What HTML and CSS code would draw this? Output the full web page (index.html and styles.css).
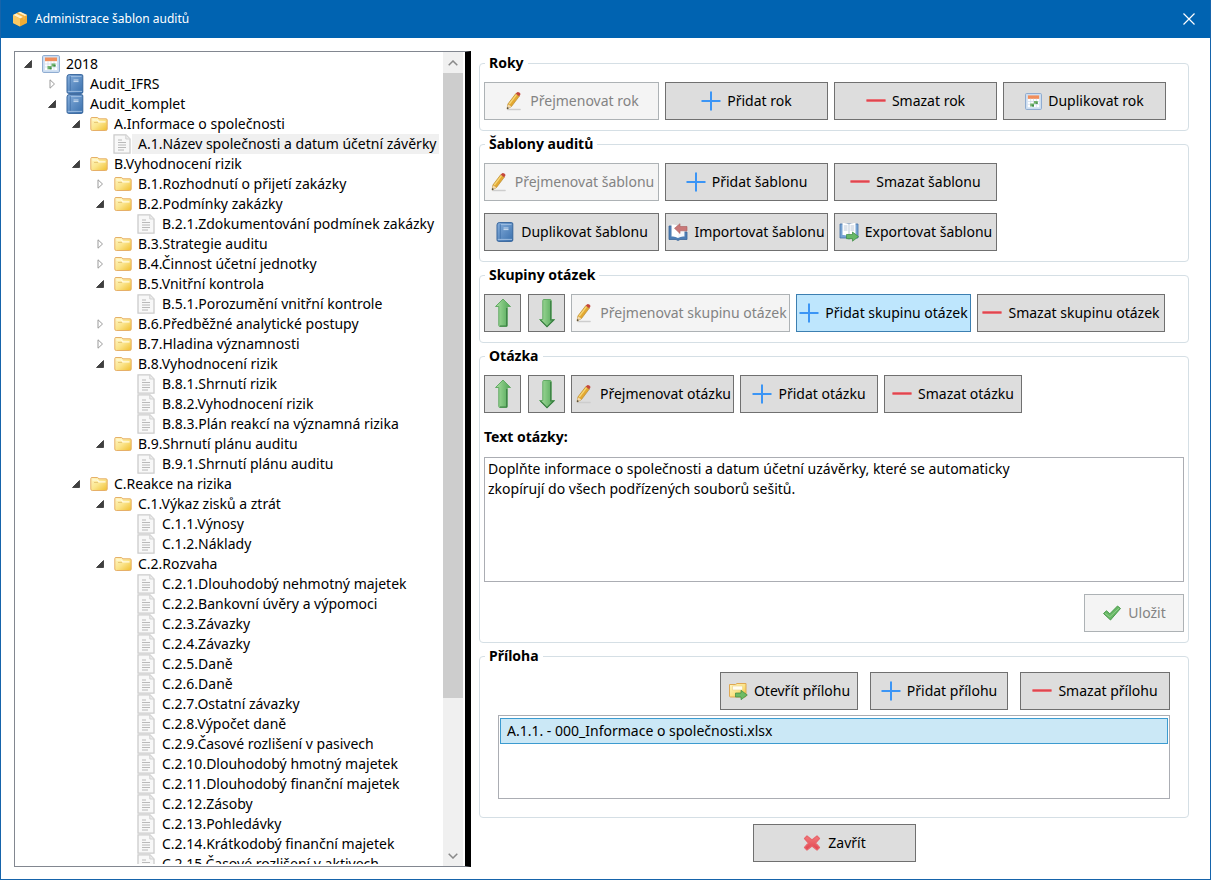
FILE: index.html
```html
<!DOCTYPE html>
<html lang="cs">
<head>
<meta charset="utf-8">
<title>Administrace šablon auditů</title>
<link rel="stylesheet" href="styles.css">
</head>
<body>
<svg class="sprite" aria-hidden="true">
  <defs>
    <linearGradient id="gBlue" x1="0" y1="0" x2="1" y2="1"><stop offset="0" stop-color="#86aedb"/><stop offset="1" stop-color="#3a70ad"/></linearGradient>
    <linearGradient id="gFolder" x1="0" y1="0" x2="1" y2="1"><stop offset="0" stop-color="#fff6c4"/><stop offset=".5" stop-color="#fbe58c"/><stop offset="1" stop-color="#f0bf2e"/></linearGradient>
    <linearGradient id="gGreen" x1="0" y1="0" x2="1" y2="0"><stop offset="0" stop-color="#a9dfa0"/><stop offset="1" stop-color="#4fa555"/></linearGradient>
    <linearGradient id="gRed" x1="0" y1="0" x2="0" y2="1"><stop offset="0" stop-color="#f37b7b"/><stop offset="1" stop-color="#e04450"/></linearGradient>
  </defs>
  <symbol id="open" viewBox="0 0 10 10"><path d="M8.500 1.500v7h-7z" fill="#404040" stroke="#222" stroke-width=".7"/></symbol>
  <symbol id="closed" viewBox="0 0 10 10"><path d="M3 .8v8.400L7.500 5z" fill="#fff" stroke="#9b9b9b"/></symbol>
  <symbol id="calendar" viewBox="0 0 18 18">
    <rect x=".6" y=".6" width="16.800" height="16.800" rx="1" fill="#d3e2f4" stroke="#86a5cd"/>
    <rect x="3" y="3" width="12" height="12" fill="#fff"/><rect x="3" y="2.500" width="12" height="3.700" fill="#f08e5c"/>
    <path d="M3 9h12M3 12h12M6 6v9M9 6v9M12 6v9" stroke="#ccd8e8" stroke-width=".7"/>
    <path d="M9.500 8.500h4v3h-4zM5.500 11h4v3.200h-4z" fill="#72b36c"/><path d="M11.500 10h2v1.500h-2zM7.500 12.500h2v1.700h-2z" fill="#3e8d49"/>
  </symbol>
  <symbol id="book" viewBox="0 0 18 20">
    <path d="M3.200.6H15.500q1.300 0 1.300 1.300V18q0 1.400-1.300 1.400H2.500Q1 19.400 1 17.800V3Q1 .6 3.200.6z" fill="url(#gBlue)" stroke="#37659c"/>
    <path d="M4.300 2.500v14.500" stroke="#3f70a8" stroke-width=".8"/><path d="M1.800 17.400H16" stroke="#a5c3e4" stroke-width=".9"/><path d="M5 2.500h10.500" stroke="#a5c3e4" stroke-width=".8"/><path d="M7.500 6h5M7.500 7.600h5" stroke="#d7e5f4" stroke-width=".9"/>
  </symbol>
  <symbol id="folder" viewBox="0 0 18 16">
    <path d="M.8 13V2.500Q.8 1.500 2 1.500h5.500l1.500 1.300h7q1.200 0 1.200 1.200V13q0 1.500-1.500 1.500H2.300Q.8 14.500.8 13z" fill="url(#gFolder)" stroke="#e6b068"/>
    <path d="M2.500 4h5l1.500 1.800h6.500" fill="none" stroke="#fffbe6" stroke-width="1.200"/><path d="M4 6.500h4" stroke="#e8c878"/>
  </symbol>
  <symbol id="page" viewBox="0 0 18 20">
    <path d="M1 .8h12L17 5v14.200H1z" fill="#f8f8f8" stroke="#cbcbcb" stroke-width="1.300"/><path d="M12.800 1v4H17" fill="#ececec" stroke="#d2d2d2"/>
    <path d="M5 6h4M5 8.500h8M5 11h8M5 13.500h8M5 16h6" stroke="#b2b2b2" stroke-width=".9"/>
  </symbol>
  <symbol id="pencil" viewBox="0 0 20 20">
    <path d="M4 18.500h12" stroke="#cdcdcd" stroke-width="1.600" stroke-linecap="round"/>
    <path d="M3 18l.9-5L11.800 2.600l3.600 2.500L7.500 15.500z" fill="#e3a932" stroke="#b07f22" stroke-width=".6"/>
    <path d="M5.300 13L12.700 3.300" stroke="#f7d777" stroke-width="1.300"/>
    <path d="M3 18l.9-4.800 3.500 2.400z" fill="#f0d9b0"/><path d="M2.900 18.200l.5-2.300 1.500 1z" fill="#333"/>
    <path d="M11.800 2.800l1-1.400q1-1 2.600.1 1.600 1.200.9 2.300l-1 1.400z" fill="#c4473b"/>
  </symbol>
  <symbol id="plus" viewBox="0 0 20 20"><path d="M10 .5v19M.5 10h19" stroke="#3b95f5" stroke-width="2"/></symbol>
  <symbol id="minus" viewBox="0 0 20 20"><path d="M.5 9.500h19" stroke="#ef8085" stroke-width="3"/><path d="M.5 9.500h19" stroke="#dd4650" stroke-width="1.600"/></symbol>
  <symbol id="up" viewBox="0 0 18 30"><path d="M9 1l7.500 7.500h-3.300v19q0 1-1 1H5.800q-1 0-1-1v-19H1.500z" fill="url(#gGreen)" stroke="#62aa64"/><path d="M12.700 10v18H6" fill="none" stroke="#3c8044" stroke-width="1.200"/></symbol>
  <symbol id="down" viewBox="0 0 18 30"><path d="M9 29l7.500-7.500h-3.300v-19q0-1-1-1H5.800q-1 0-1 1v19H1.500z" fill="url(#gGreen)" stroke="#62aa64"/><path d="M12.700 3v19h3L9 28.600 2.500 22" fill="none" stroke="#3c8044" stroke-width="1.200"/></symbol>
  <symbol id="import" viewBox="0 0 20 20">
    <path d="M1 4h3v10h12V10h3v7.500h-7l-2 1-2-1H1z" fill="#4c7db5" stroke="#3a6599" stroke-width=".8"/><path d="M3.500 2.500q4-.5 6.500 1.500v12q-3-2-6.500-1.500z" fill="#fff"/><path d="M16.500 5q-4-.5-6.500 1.500V16q3-2 6.500-1.500z" fill="#f4f7fb"/>
    <path d="M6.500 6.300L12 1.700v2.800h7v4.300h-7v2.700z" fill="#c97878" stroke="#a85c5c" stroke-width=".6"/>
  </symbol>
  <symbol id="export" viewBox="0 0 20 20">
    <path d="M1 2h18v14h-7l-2 1-2-1H1z" fill="#78a4d4" stroke="#4673a8" stroke-width=".8"/><path d="M3.500 1q4-.5 6.500 1.500v12Q7 12.500 3.500 13z" fill="#fff"/><path d="M16.500 1q-4-.5-6.500 1.500v12q3-2 6.500-1.500z" fill="#fff"/>
    <path d="M4.800 4h3.700M4.800 6h3.700M4.800 8h3.700M11.500 4h3.700M11.500 6h3.700M11.500 8h3.700M10 3v11" stroke="#a9b9cb" stroke-width=".8"/>
    <path d="M7.500 12.500h6V10l6 4.600-6 4.600v-2.500h-6z" fill="#67b866" stroke="#3b8b40" stroke-width=".7"/>
  </symbol>
  <symbol id="openfile" viewBox="0 0 20 20">
    <path d="M1.500 15V3.500h6l1.500-1h9V15q0 1-1 1H2.500q-1 0-1-1z" fill="url(#gFolder)" stroke="#dfa853"/><path d="M4.500 5h10v4h-10z" fill="#fffdf2" stroke="#ead08c" stroke-width=".6"/>
    <path d="M7.500 12h5.500V9.300l6.300 4.700-6.300 4.700V16H7.500z" fill="#6dbb63" stroke="#3d8a40" stroke-width=".7"/>
  </symbol>
  <symbol id="check" viewBox="0 0 20 20"><path d="M1.500 10.500l3-2.700 3.300 3L15.500 3l3 2.500L8.500 17z" fill="#68b766" stroke="#4a9b4c" stroke-linejoin="round"/><path d="M3 10.300l4.800 3.500L17 5.200" stroke="#8fd089" fill="none"/></symbol>
  <symbol id="cross" viewBox="0 0 20 20"><path d="M5 3l5 4 5-4 2.500 2.500-4 4.500 4 4.500L15 17l-5-4-5 4-2.500-2.500 4-4.500-4-4.500z" fill="url(#gRed)" stroke="#e8656b" stroke-width="1.200" stroke-linejoin="round"/></symbol>
</svg>

<header class="titlebar">
  <svg class="logo" viewBox="0 0 16 16" aria-hidden="true"><path d="M8 .7l7 3.200v8L8 15.500 1 11.900v-8z" fill="#f0ac35"/><path d="M8 .7l7 3.200L8 7.400 1 3.900z" fill="#fff0c8"/><path d="M1 3.900l7 3.500v8.100l-7-3.600z" fill="#fac964"/><path d="M4 2.500l7 3.500v3l2-1V5L6 1.600z" fill="#f3b444"/></svg>
  <h1>Administrace šablon auditů</h1>
  <button class="close" aria-label="Zavřít okno"><svg viewBox="0 0 12 12"><path d="M.5.5l11 11M11.500.5l-11 11" stroke="#fff" stroke-width="1.200"/></svg></button>
</header>

<main class="content">
  <nav class="tree-pane" aria-label="Šablony">
    <div class="tree-scroll">
      <ul class="tree">
        <li><div class="row"><button class="toggle" aria-label="Sbalit"><svg><use href="#open"/></svg></button><svg class="node"><use href="#calendar"/></svg><span class="label">2018</span></div>
        <ul>
          <li><div class="row"><button class="toggle" aria-label="Rozbalit"><svg><use href="#closed"/></svg></button><svg class="node"><use href="#book"/></svg><span class="label">Audit_IFRS</span></div></li>
          <li><div class="row"><button class="toggle" aria-label="Sbalit"><svg><use href="#open"/></svg></button><svg class="node"><use href="#book"/></svg><span class="label">Audit_komplet</span></div>
          <ul>
            <li><div class="row"><button class="toggle" aria-label="Sbalit"><svg><use href="#open"/></svg></button><svg class="node"><use href="#folder"/></svg><span class="label">A.Informace o společnosti</span></div>
            <ul>
              <li><div class="row leaf"><svg class="node"><use href="#page"/></svg><span class="label selected">A.1.Název společnosti a datum účetní závěrky</span></div></li>
            </ul></li>
            <li><div class="row"><button class="toggle" aria-label="Sbalit"><svg><use href="#open"/></svg></button><svg class="node"><use href="#folder"/></svg><span class="label">B.Vyhodnocení rizik</span></div>
            <ul>
              <li><div class="row"><button class="toggle" aria-label="Rozbalit"><svg><use href="#closed"/></svg></button><svg class="node"><use href="#folder"/></svg><span class="label">B.1.Rozhodnutí o přijetí zakázky</span></div></li>
              <li><div class="row"><button class="toggle" aria-label="Sbalit"><svg><use href="#open"/></svg></button><svg class="node"><use href="#folder"/></svg><span class="label">B.2.Podmínky zakázky</span></div>
              <ul>
                <li><div class="row leaf"><svg class="node"><use href="#page"/></svg><span class="label">B.2.1.Zdokumentování podmínek zakázky</span></div></li>
              </ul></li>
              <li><div class="row"><button class="toggle" aria-label="Rozbalit"><svg><use href="#closed"/></svg></button><svg class="node"><use href="#folder"/></svg><span class="label">B.3.Strategie auditu</span></div></li>
              <li><div class="row"><button class="toggle" aria-label="Rozbalit"><svg><use href="#closed"/></svg></button><svg class="node"><use href="#folder"/></svg><span class="label">B.4.Činnost účetní jednotky</span></div></li>
              <li><div class="row"><button class="toggle" aria-label="Sbalit"><svg><use href="#open"/></svg></button><svg class="node"><use href="#folder"/></svg><span class="label">B.5.Vnitřní kontrola</span></div>
              <ul>
                <li><div class="row leaf"><svg class="node"><use href="#page"/></svg><span class="label">B.5.1.Porozumění vnitřní kontrole</span></div></li>
              </ul></li>
              <li><div class="row"><button class="toggle" aria-label="Rozbalit"><svg><use href="#closed"/></svg></button><svg class="node"><use href="#folder"/></svg><span class="label">B.6.Předběžné analytické postupy</span></div></li>
              <li><div class="row"><button class="toggle" aria-label="Rozbalit"><svg><use href="#closed"/></svg></button><svg class="node"><use href="#folder"/></svg><span class="label">B.7.Hladina významnosti</span></div></li>
              <li><div class="row"><button class="toggle" aria-label="Sbalit"><svg><use href="#open"/></svg></button><svg class="node"><use href="#folder"/></svg><span class="label">B.8.Vyhodnocení rizik</span></div>
              <ul>
                <li><div class="row leaf"><svg class="node"><use href="#page"/></svg><span class="label">B.8.1.Shrnutí rizik</span></div></li>
                <li><div class="row leaf"><svg class="node"><use href="#page"/></svg><span class="label">B.8.2.Vyhodnocení rizik</span></div></li>
                <li><div class="row leaf"><svg class="node"><use href="#page"/></svg><span class="label">B.8.3.Plán reakcí na významná rizika</span></div></li>
              </ul></li>
              <li><div class="row"><button class="toggle" aria-label="Sbalit"><svg><use href="#open"/></svg></button><svg class="node"><use href="#folder"/></svg><span class="label">B.9.Shrnutí plánu auditu</span></div>
              <ul>
                <li><div class="row leaf"><svg class="node"><use href="#page"/></svg><span class="label">B.9.1.Shrnutí plánu auditu</span></div></li>
              </ul></li>
            </ul></li>
            <li><div class="row"><button class="toggle" aria-label="Sbalit"><svg><use href="#open"/></svg></button><svg class="node"><use href="#folder"/></svg><span class="label">C.Reakce na rizika</span></div>
            <ul>
              <li><div class="row"><button class="toggle" aria-label="Sbalit"><svg><use href="#open"/></svg></button><svg class="node"><use href="#folder"/></svg><span class="label">C.1.Výkaz zisků a ztrát</span></div>
              <ul>
                <li><div class="row leaf"><svg class="node"><use href="#page"/></svg><span class="label">C.1.1.Výnosy</span></div></li>
                <li><div class="row leaf"><svg class="node"><use href="#page"/></svg><span class="label">C.1.2.Náklady</span></div></li>
              </ul></li>
              <li><div class="row"><button class="toggle" aria-label="Sbalit"><svg><use href="#open"/></svg></button><svg class="node"><use href="#folder"/></svg><span class="label">C.2.Rozvaha</span></div>
              <ul>
                <li><div class="row leaf"><svg class="node"><use href="#page"/></svg><span class="label">C.2.1.Dlouhodobý nehmotný majetek</span></div></li>
                <li><div class="row leaf"><svg class="node"><use href="#page"/></svg><span class="label">C.2.2.Bankovní úvěry a výpomoci</span></div></li>
                <li><div class="row leaf"><svg class="node"><use href="#page"/></svg><span class="label">C.2.3.Závazky</span></div></li>
                <li><div class="row leaf"><svg class="node"><use href="#page"/></svg><span class="label">C.2.4.Závazky</span></div></li>
                <li><div class="row leaf"><svg class="node"><use href="#page"/></svg><span class="label">C.2.5.Daně</span></div></li>
                <li><div class="row leaf"><svg class="node"><use href="#page"/></svg><span class="label">C.2.6.Daně</span></div></li>
                <li><div class="row leaf"><svg class="node"><use href="#page"/></svg><span class="label">C.2.7.Ostatní závazky</span></div></li>
                <li><div class="row leaf"><svg class="node"><use href="#page"/></svg><span class="label">C.2.8.Výpočet daně</span></div></li>
                <li><div class="row leaf"><svg class="node"><use href="#page"/></svg><span class="label">C.2.9.Časové rozlišení v pasivech</span></div></li>
                <li><div class="row leaf"><svg class="node"><use href="#page"/></svg><span class="label">C.2.10.Dlouhodobý hmotný majetek</span></div></li>
                <li><div class="row leaf"><svg class="node"><use href="#page"/></svg><span class="label">C.2.11.Dlouhodobý finanční majetek</span></div></li>
                <li><div class="row leaf"><svg class="node"><use href="#page"/></svg><span class="label">C.2.12.Zásoby</span></div></li>
                <li><div class="row leaf"><svg class="node"><use href="#page"/></svg><span class="label">C.2.13.Pohledávky</span></div></li>
                <li><div class="row leaf"><svg class="node"><use href="#page"/></svg><span class="label">C.2.14.Krátkodobý finanční majetek</span></div></li>
                <li><div class="row leaf"><svg class="node"><use href="#page"/></svg><span class="label">C.2.15.Časové rozlišení v aktivech</span></div></li>
              </ul></li>
            </ul></li>
          </ul></li>
        </ul></li>
      </ul>
    </div>
    <div class="scrollbar">
      <button class="scroll-btn" aria-label="Nahoru"><svg viewBox="0 0 10 6"><path d="M.7 5.300L5 1l4.300 4.300"/></svg></button>
      <div class="track"><div class="thumb"></div></div>
      <button class="scroll-btn" aria-label="Dolů"><svg viewBox="0 0 10 6"><path d="M.7.7L5 5 9.300.7"/></svg></button>
    </div>
  </nav>

  <div class="panel">
    <fieldset>
      <legend>Roky</legend>
      <div class="buttons">
        <button class="btn w-lg" disabled><svg><use href="#pencil"/></svg>Přejmenovat rok</button>
        <button class="btn w-md"><svg><use href="#plus"/></svg>Přidat rok</button>
        <button class="btn w-md"><svg><use href="#minus"/></svg>Smazat rok</button>
        <button class="btn w-md small-icon"><svg><use href="#calendar"/></svg>Duplikovat rok</button>
      </div>
    </fieldset>

    <fieldset>
      <legend>Šablony auditů</legend>
      <div class="buttons">
        <button class="btn w-lg" disabled><svg><use href="#pencil"/></svg>Přejmenovat šablonu</button>
        <button class="btn w-md"><svg><use href="#plus"/></svg>Přidat šablonu</button>
        <button class="btn w-md"><svg><use href="#minus"/></svg>Smazat šablonu</button>
      </div>
      <div class="buttons next">
        <button class="btn w-lg"><svg><use href="#book"/></svg>Duplikovat šablonu</button>
        <button class="btn w-md"><svg><use href="#import"/></svg>Importovat šablonu</button>
        <button class="btn w-md"><svg><use href="#export"/></svg>Exportovat šablonu</button>
      </div>
    </fieldset>

    <fieldset>
      <legend>Skupiny otázek</legend>
      <div class="buttons">
        <button class="btn arrow" aria-label="Skupinu nahoru"><svg><use href="#up"/></svg></button>
        <button class="btn arrow" aria-label="Skupinu dolů"><svg><use href="#down"/></svg></button>
        <button class="btn w-xxl" disabled><svg><use href="#pencil"/></svg>Přejmenovat skupinu otázek</button>
        <button class="btn w-lg active"><svg><use href="#plus"/></svg>Přidat skupinu otázek</button>
        <button class="btn w-xl"><svg><use href="#minus"/></svg>Smazat skupinu otázek</button>
      </div>
    </fieldset>

    <fieldset>
      <legend>Otázka</legend>
      <div class="buttons">
        <button class="btn arrow" aria-label="Otázku nahoru"><svg><use href="#up"/></svg></button>
        <button class="btn arrow" aria-label="Otázku dolů"><svg><use href="#down"/></svg></button>
        <button class="btn w-md"><svg><use href="#pencil"/></svg>Přejmenovat otázku</button>
        <button class="btn w-sm"><svg><use href="#plus"/></svg>Přidat otázku</button>
        <button class="btn w-sm"><svg><use href="#minus"/></svg>Smazat otázku</button>
      </div>
      <label class="text-label" for="question">Text otázky:</label>
      <textarea id="question" class="question" spellcheck="false">Doplňte informace o společnosti a datum účetní uzávěrky, které se automaticky
zkopírují do všech podřízených souborů sešitů.</textarea>
      <div class="buttons end">
        <button class="btn w-xs" disabled><svg><use href="#check"/></svg>Uložit</button>
      </div>
    </fieldset>

    <fieldset class="attachments">
      <legend>Příloha</legend>
      <div class="attachment-body">
        <div class="buttons end spaced">
          <button class="btn w-sm"><svg><use href="#openfile"/></svg>Otevřít přílohu</button>
          <button class="btn w-sm"><svg><use href="#plus"/></svg>Přidat přílohu</button>
          <button class="btn w-ms"><svg><use href="#minus"/></svg>Smazat přílohu</button>
        </div>
        <ul class="files">
          <li class="file">A.1.1. - 000_Informace o společnosti.xlsx</li>
        </ul>
      </div>
    </fieldset>

    <button class="btn w-md finish"><svg><use href="#cross"/></svg>Zavřít</button>
  </div>
</main>
</body>
</html>
```
FILE: styles.css
```css
* { box-sizing: border-box; }

body {
  margin: 0;
  height: 100vh;
  display: flex;
  flex-direction: column;
  border: 1px solid #1664ab;
  border-top: 0;
  background: #fff;
  color: #000;
  font: 14px/20px "Noto Sans", "Open Sans", sans-serif;
}

button, textarea { font: inherit; color: inherit; }
ul { list-style: none; margin: 0; padding: 0; }
.sprite { position: absolute; width: 0; height: 0; }

/* Title bar */
.titlebar {
  flex: none;
  display: flex;
  align-items: center;
  height: 38px;
  padding: 0 13px 0 11px;
  background: #0063b1;
  color: #fff;
}
.logo { width: 16px; height: 16px; margin-right: 7px; }
.titlebar h1 { margin: 0; font-size: 12px; font-weight: 400; line-height: 20px; }
.close { margin-left: auto; width: 16px; height: 20px; padding: 2px; border: 0; background: none; }
.close svg { display: block; width: 12px; height: 12px; }

.content {
  flex: 1;
  min-height: 0;
  display: grid;
  grid-template-columns: 457px 1fr;
  gap: 8px;
  padding: 13px 21px 12px 13px;
}

/* Tree */
.tree-pane {
  min-height: 0;
  display: flex;
  border: 1px solid #828790;
  border-right: 6px solid #000;
  padding-right: 2px;
}
.tree-scroll { flex: 1; min-width: 0; overflow: hidden; margin: 2px 0; }
.tree ul { padding-left: 24px; }
.row { display: flex; align-items: center; height: 20px; padding-left: 7px; }
.row.leaf { padding-left: 26px; }
.toggle { flex: none; width: 20px; height: 16px; padding: 0 1px; border: 0; background: none; }
.leaf .node { margin-right: 1px; }
.toggle svg { display: block; width: 10px; height: 10px; }
.node { flex: none; width: 18px; height: 20px; }
.label { padding: 0 2px 0 6px; white-space: nowrap; }
.label.selected { background: #f0f0f0; }

.scrollbar { flex: none; width: 20px; display: flex; flex-direction: column; background: #f0f0f0; }
.scroll-btn { flex: none; display: grid; place-items: center; height: 21px; padding: 0; border: 0; background: none; }
.scroll-btn svg { width: 10px; height: 6px; fill: none; stroke: #8a8a8a; stroke-width: 1.5; }
.track { flex: 1; }
.thumb { height: 81%; background: #cdcdcd; }

/* Groups */
.panel { display: flex; flex-direction: column; gap: 3px; padding-top: 2px; min-width: 0; }
fieldset {
  margin: 0;
  min-width: 0;
  padding: 9px 4px 10px;
  border: 1px solid #d5dfe5;
  border-radius: 4px;
}
legend { margin-left: 1px; padding: 0 4px; height: 20px; font-weight: 700; }

.buttons { display: flex; gap: 6px; }
.buttons.next { margin-top: 12px; }
.buttons.end { justify-content: flex-end; }
.buttons.spaced { gap: 12px; }

.btn {
  flex: none;
  display: flex;
  align-items: center;
  justify-content: center;
  gap: 6px;
  height: 38px;
  padding: 0;
  border: 1px solid #707070;
  background: #ddd;
  white-space: nowrap;
}
.btn svg { flex: none; width: 20px; height: 20px; }
.btn.small-icon svg { width: 17px; height: 17px; }
.btn:disabled { border-color: #adb2b5; background: #f4f4f4; color: #838383; }
.btn.active { border-color: #3c7fb1; background: #bee6fd; }
.btn.arrow { width: 37px; }
.btn.arrow + .arrow { margin-left: 1px; }
.btn.arrow svg { width: 18px; height: 30px; }
.w-xs { width: 100px; }
.w-sm { width: 138px; }
.w-ms { width: 150px; }
.w-md { width: 163px; }
.w-lg { width: 175px; }
.w-xl { width: 188px; }
.w-xxl { width: 219px; }

.text-label { display: block; margin: 14px 0 10px; font-weight: 700; }
.question {
  display: block;
  width: 100%;
  height: 125px;
  margin-bottom: 12px;
  padding: 1px 3px;
  border: 1px solid #abadb3;
  resize: none;
  outline: 0;
}

.attachments { padding-top: 6px; padding-bottom: 18px; }
.attachment-body { padding: 0 14px; }
.files { height: 84px; margin-top: 5px; padding: 2px 1px; border: 1px solid #abadb3; }
.file { height: 26px; padding: 2px 6px; border: 1px solid #3c9bd0; background: #cbe8f6; }
.finish { align-self: center; margin-top: 3px; }
```
